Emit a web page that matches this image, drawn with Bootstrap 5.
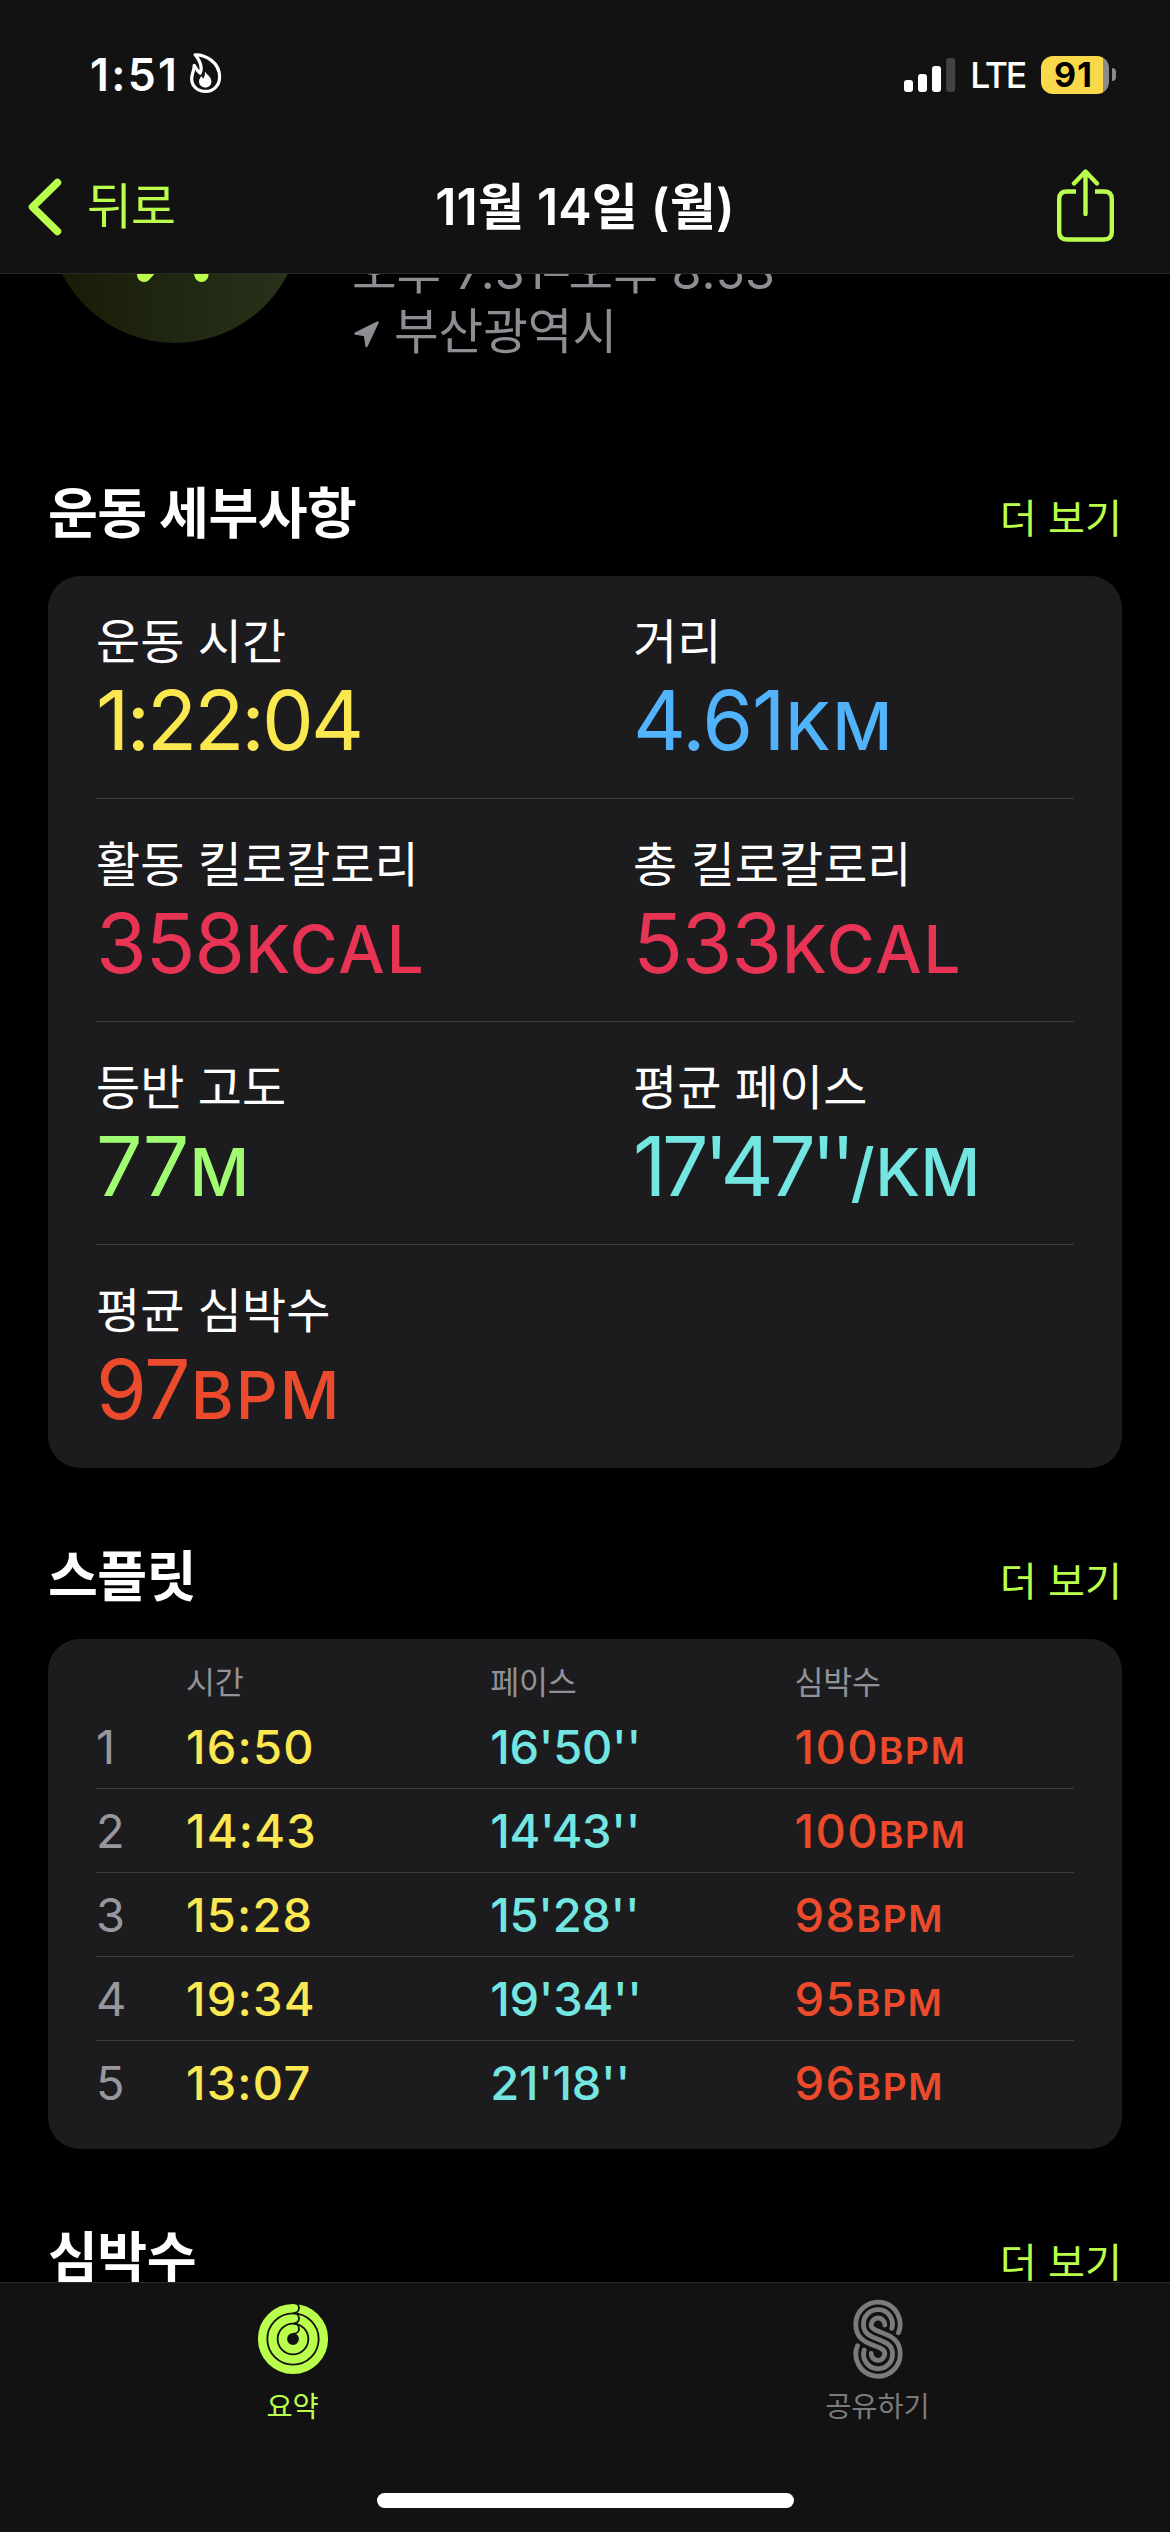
<!DOCTYPE html>
<html lang="ko" data-bs-theme="dark">
<head>
<meta charset="utf-8">
<meta name="viewport" content="width=device-width, initial-scale=1">
<title>운동 요약</title>
<link rel="stylesheet" href="https://cdn.jsdelivr.net/npm/bootstrap@5.3.0/dist/css/bootstrap.min.css">
<style>
  :root { --lime:#b9ff4b; --bar:#121212; --panel:#1c1c1e; --rule:#3d3d41; --dim:#929197; }
  body { background:#000; color:#fff; font-family:Inter,"Noto Sans CJK KR",sans-serif; height:2532px; overflow:hidden; }
  svg { display:block; flex:none; }
  .lime { color:var(--lime); }
  .c-yellow { color:#fbe74f; } .c-blue { color:#50b3fb; } .c-pink { color:#e73455; }
  .c-green { color:#a0fd71; } .c-cyan { color:#74e6e2; } .c-orange { color:#eb4a2c; }

  /* top bars */
  .top-bars { background:var(--bar); border-bottom:1px solid #2a2a2b; height:274px; }
  .status-row { height:149px; padding:0 54px 0 90px; }
  .clock { font-size:44.6px; font-weight:600; letter-spacing:2.3px; line-height:50px; }
  .flame { margin:-3px 0 0 11px; }
  .carrier { font-size:35.6px; font-weight:500; letter-spacing:-2.2px; line-height:40px; margin:3px 16px 0 14px; }
  .battery { width:68px; height:38px; border-radius:12px; color:#000; font-size:34px; font-weight:700; letter-spacing:1.2px; line-height:38px; background:linear-gradient(90deg,#f9d84a 62px,#8b8b8b 62px); padding-right:3px; }
  .battery-tip { width:4px; height:13px; border-radius:0 8px 8px 0; background:#8b8b8b; margin-left:3px; }
  .title-row { height:116px; padding:0 56px 0 28px; }
  .title-side { flex:1 0 0; }
  .back-label { font-size:48.8px; letter-spacing:-.8px; margin-left:25px; line-height:60px; }
  .page-title { font-size:50.2px; font-weight:600; letter-spacing:.1px; line-height:60px; margin:0; }
  .share-side { flex-basis:-28px; }

  /* workout summary */
  .scroll-area { padding:88px 48px 0; }
  .workout-head { height:274px; }
  .workout-disc { width:254px; height:254px; margin-top:1px; background:linear-gradient(90deg,#181b06,#28331a); padding-bottom:60px; }
  .workout-meta { color:#8e8d93; font-size:48.5px; line-height:60px; margin-left:50px; }
  .place-arrow { margin:4px 15px 0 2px; }
  .section-head { margin-bottom:31px; }
  .section-title { font-size:54.2px; font-weight:700; line-height:64px; letter-spacing:-.5px; margin:0; }
  .more-link { font-size:40.2px; line-height:50px; text-decoration:none; }
  .panel { background:var(--panel); border-radius:32px; padding:0 48px; }
  .first-section { margin-top:119px; }
  .next-section { margin-top:76px; }

  .metric-row { height:223px; padding-top:38px; border-bottom:1px solid var(--rule); }
  .metric-row:last-child { border-bottom:0; }
  .metric-row .row { --bs-gutter-x:96px; }
  .metric-label { font-size:48px; line-height:56px; white-space:nowrap; }
  .metric-value { font-size:82.2px; line-height:80px; margin-top:10px; letter-spacing:-1.3px; white-space:nowrap; }
  .metric-unit { font-size:65.4px; font-weight:500; letter-spacing:2px; margin-left:1.5px; }
  .metric-clock { letter-spacing:-3px; }
  .metric-pace { letter-spacing:-4.5px; }
  .metric-pace .metric-unit { letter-spacing:.5px; margin-left:0; }
  .tick { letter-spacing:-5px; }
  .tick-min { margin-right:-3px; }

  .split-head { height:66px; padding-top:24px; font-size:31.5px; line-height:40px; letter-spacing:-.3px; color:var(--dim); }
  .split-row { height:84px; padding-top:14px; font-size:47px; line-height:56px; font-weight:500; border-bottom:1px solid var(--rule); }
  .split-row:last-child { border-bottom:0; }
  .splits { padding-bottom:24px; }
  .c-no { width:90px; font-weight:400; color:#98979e; }
  .c-col { width:304.300px; white-space:nowrap; }
  .split-time { letter-spacing:1.2px; }
  .split-pace { letter-spacing:-.3px; }
  .split-hr { letter-spacing:1.4px; }
  .split-hr span { font-size:37px; font-weight:600; letter-spacing:1.7px; }

  /* tab bar */
  .tab-strip { height:250px; background:var(--bar); border-top:1px solid #2a2a2b; }
  .tab-link { padding-top:16px; }
  .tab-label { font-size:28.4px; line-height:36px; margin-top:10px; }
  .tab-off { color:#7b7b7b; }
  .home-pill { width:417px; height:15px; background:#fff; margin-bottom:24px; }
</style>
</head>
<body>

<header class="top-bars fixed-top">
  <div class="status-row d-flex align-items-center justify-content-between">
    <div class="d-flex align-items-center">
      <span class="clock">1:51</span>
      <svg class="flame" width="32" height="40" viewBox="0 0 32 40">
        <path d="M5.200 1.800C15 1.400 29.600 9 29.600 24C29.600 33 23 38.400 15.600 38.400C7.500 38.400 1.700 33 1.700 26C1.700 20 4.200 18 4.200 12.300L7.500 17.500L10.200 20.200C12.800 14 9 6.500 5.200 1.800Z" fill="none" stroke="#fff" stroke-width="3.200" stroke-linejoin="round"/>
        <path d="M15 18.500C16.500 21.500 21.400 23.500 21.400 28.500C21.400 32 19 34.500 15.500 34.500C12 34.500 9 32 9 28.500C9 26 10.500 25 11.200 23L13.300 25.500C14.600 23.500 15 21 15 18.500Z" fill="#fff"/>
      </svg>
    </div>
    <div class="d-flex align-items-center">
      <svg width="52" height="34" viewBox="0 0 52 34">
        <g fill="#fff"><rect x="0" y="22" width="9" height="12" rx="3"/><rect x="14" y="16" width="9" height="18" rx="3"/><rect x="28" y="8" width="9" height="26" rx="3"/><rect x="42.200" y="0" width="9" height="34" rx="3" fill="#424242"/></g>
      </svg>
      <span class="carrier">LTE</span>
      <span class="battery d-flex justify-content-center">91</span>
      <span class="battery-tip"></span>
    </div>
  </div>
  <nav class="title-row d-flex align-items-center">
    <a class="title-side d-flex align-items-center lime text-decoration-none ps-0 me-0" href="#">
      <svg width="34" height="58" viewBox="0 0 34 58" fill="none" stroke="currentColor" stroke-width="7.500" stroke-linecap="round" stroke-linejoin="round"><path d="M29.500 4.500L4.500 29L29.500 53.500"/></svg>
      <span class="back-label">뒤로</span>
    </a>
    <h1 class="page-title ms-4 ps-1">11월 14일 (월)</h1>
    <a class="title-side d-flex justify-content-end lime" href="#">
      <svg class="mb-1" width="57" height="73" viewBox="0 0 57 73" fill="none" stroke="currentColor" stroke-width="4.400" stroke-linecap="round" stroke-linejoin="round">
        <path d="M19 22.500H10Q2.200 22.500 2.200 30V63Q2.200 70.500 10 70.500H47Q54.800 70.500 54.800 63V30Q54.800 22.500 47 22.500H38" stroke-linecap="butt"/>
        <path d="M28.500 3V45M17 14.500L28.500 2.500L40 14.500"/>
      </svg>
    </a>
  </nav>
</header>

<main class="scroll-area">
  <section class="workout-head d-flex">
    <div class="workout-disc rounded-circle d-flex justify-content-center align-items-end">
      <svg width="76" height="120" viewBox="0 0 76 120" fill="none" stroke="#b9ff4b" stroke-width="14" stroke-linecap="round" stroke-linejoin="round">
        <path d="M7 112L34 82L37 45L55 74L64.500 112M37 40L14 54M38 40L62 56"/><circle cx="39" cy="13" r="5"/>
      </svg>
    </div>
    <div class="workout-meta d-flex flex-column justify-content-end">
      <span>오후 7:31–오후 8:53</span>
      <span class="d-flex align-items-center">
        <svg class="place-arrow" width="25" height="27" viewBox="0 0 25 27"><path d="M23.500 1.500L1.500 12.500L11 14L12.500 25Z" fill="#8e8d93" stroke="#8e8d93" stroke-width="2.400" stroke-linejoin="round"/></svg>
        부산광역시
      </span>
    </div>
  </section>

  <section class="first-section">
    <div class="section-head d-flex justify-content-between align-items-baseline">
      <h2 class="section-title">운동 세부사항</h2><a class="more-link lime" href="#">더 보기</a>
    </div>
    <div class="panel">
      <div class="metric-row"><div class="row">
        <div class="col-6"><div class="metric-label">운동 시간</div><div class="metric-value metric-clock c-yellow">1:22:04</div></div>
        <div class="col-6"><div class="metric-label">거리</div><div class="metric-value c-blue">4.61<span class="metric-unit">KM</span></div></div>
      </div></div>
      <div class="metric-row"><div class="row">
        <div class="col-6"><div class="metric-label">활동 킬로칼로리</div><div class="metric-value c-pink">358<span class="metric-unit">KCAL</span></div></div>
        <div class="col-6"><div class="metric-label">총 킬로칼로리</div><div class="metric-value c-pink">533<span class="metric-unit">KCAL</span></div></div>
      </div></div>
      <div class="metric-row"><div class="row">
        <div class="col-6"><div class="metric-label">등반 고도</div><div class="metric-value c-green">77<span class="metric-unit">M</span></div></div>
        <div class="col-6"><div class="metric-label">평균 페이스</div><div class="metric-value metric-pace c-cyan">17<span class="tick tick-min">'</span>47<span class="tick">''</span><span class="metric-unit">/KM</span></div></div>
      </div></div>
      <div class="metric-row"><div class="row">
        <div class="col-6"><div class="metric-label">평균 심박수</div><div class="metric-value c-orange">97<span class="metric-unit">BPM</span></div></div>
      </div></div>
    </div>
  </section>

  <section class="next-section">
    <div class="section-head d-flex justify-content-between align-items-baseline">
      <h2 class="section-title">스플릿</h2><a class="more-link lime" href="#">더 보기</a>
    </div>
    <div class="panel splits">
      <div class="split-head d-flex"><span class="c-no"></span><span class="c-col">시간</span><span class="c-col">페이스</span><span>심박수</span></div>
      <div class="split-row d-flex"><span class="c-no">1</span><span class="c-col split-time c-yellow">16:50</span><span class="c-col split-pace c-cyan">16'50''</span><span class="split-hr c-orange">100<span>BPM</span></span></div>
      <div class="split-row d-flex"><span class="c-no">2</span><span class="c-col split-time c-yellow">14:43</span><span class="c-col split-pace c-cyan">14'43''</span><span class="split-hr c-orange">100<span>BPM</span></span></div>
      <div class="split-row d-flex"><span class="c-no">3</span><span class="c-col split-time c-yellow">15:28</span><span class="c-col split-pace c-cyan">15'28''</span><span class="split-hr c-orange">98<span>BPM</span></span></div>
      <div class="split-row d-flex"><span class="c-no">4</span><span class="c-col split-time c-yellow">19:34</span><span class="c-col split-pace c-cyan">19'34''</span><span class="split-hr c-orange">95<span>BPM</span></span></div>
      <div class="split-row d-flex"><span class="c-no">5</span><span class="c-col split-time c-yellow">13:07</span><span class="c-col split-pace c-cyan">21'18''</span><span class="split-hr c-orange">96<span>BPM</span></span></div>
    </div>
  </section>

  <section class="next-section">
    <div class="section-head d-flex justify-content-between align-items-baseline">
      <h2 class="section-title">심박수</h2><a class="more-link lime" href="#">더 보기</a>
    </div>
  </section>
</main>

<footer class="tab-strip fixed-bottom d-flex flex-column justify-content-between align-items-center">
  <nav class="d-flex w-100">
    <a class="tab-link w-50 d-flex flex-column align-items-center lime text-decoration-none" href="#">
      <svg width="80" height="80" viewBox="96 87 240 240" fill="none">
        <g stroke="currentColor" stroke-width="25.500"><circle cx="216" cy="207" r="92.500"/><circle cx="216" cy="207" r="61.500"/><circle cx="216" cy="207" r="30.500"/></g>
        <path d="M219 99A15 15 0 0 1 219 129M219 130A15 15 0 0 1 219 160M219 161A15 15 0 0 1 219 191" stroke="#121212" stroke-width="5.500" stroke-linecap="round"/>
      </svg>
      <span class="tab-label">요약</span>
    </a>
    <a class="tab-link w-50 d-flex flex-column align-items-center tab-off text-decoration-none" href="#">
      <svg width="80" height="80" viewBox="109 87 240 240" fill="none" stroke="currentColor" stroke-width="14.500" stroke-linecap="round">
        <path d="M290.500 188A66.500 66.500 0 1 0 162.500 165C162.500 200 185 215 215 226C240 235 249.500 240 249.500 251A20.500 20.500 0 0 1 208.500 250"/>
        <path d="M270.500 175A43.500 43.500 0 1 0 185.500 165C185.500 190 205 198 229 207.500C253 217 272.500 225 272.500 250A43.500 43.500 0 1 1 187.500 240"/>
        <path d="M249.500 165A20.500 20.500 0 0 0 208.500 164C208.500 175 218 180 243 189C273 200 295.500 215 295.500 250A66.500 66.500 0 1 1 167.500 227"/>
      </svg>
      <span class="tab-label">공유하기</span>
    </a>
  </nav>
  <div class="home-pill rounded-pill"></div>
</footer>

<script src="https://cdn.jsdelivr.net/npm/bootstrap@5.3.0/dist/js/bootstrap.bundle.min.js"></script>
</body>
</html>
